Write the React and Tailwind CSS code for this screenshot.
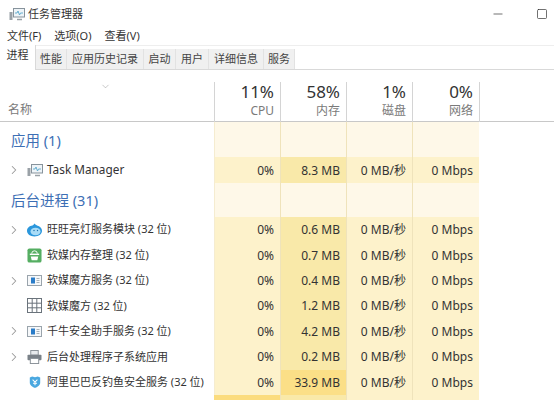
import { ChevronRight, ChevronDown, Minus, Square } from "lucide-react";

const font = "font-['Noto_Sans','Noto_Sans_CJK_SC',sans-serif]";
const tabs = [
  ["性能", "w-[31px]"],
  ["应用历史记录", "w-[77px]"],
  ["启动", "w-[32px]"],
  ["用户", "w-[33px]"],
  ["详细信息", "w-[55px]"],
  ["服务", "w-[31px]"],
];

function MonitorIcon() {
  return (
    <svg width="16" height="14" viewBox="0 0 16 14" fill="none">
      <rect x="0.5" y="5" width="3" height="8" fill="#9aa1a7" />
      <rect x="4.5" y="1.5" width="11" height="8.5" fill="#eef4f8" stroke="#87939c" />
      <path d="M6 6h2l1-2 1.5 4 1-2H14" stroke="#5aa8cc" strokeWidth="0.9" />
      <path d="M8 12.5h5" stroke="#9aa1a7" strokeWidth="1.5" />
    </svg>
  );
}

function WangIcon() {
  return (
    <svg width="15" height="14" viewBox="0 0 15 14">
      <path d="M7.500 0.500c1 1 1.500 1.500 2.500 2 3 .6 5 2.700 5 5.300 0 3.400-3.300 5.700-7.500 5.700S0 11.200 0 7.800c0-3 2.500-5 5.500-5.300.8-.4 1.300-1 2-2z" fill="#2b97dc" />
      <ellipse cx="8.500" cy="8.500" rx="5" ry="3.800" fill="#a9dcf7" />
      <circle cx="7" cy="7.500" r="0.700" fill="#1b6fa8" />
      <circle cx="10.500" cy="7.500" r="0.700" fill="#1b6fa8" />
    </svg>
  );
}

function CleanIcon() {
  return (
    <svg width="15" height="15" viewBox="0 0 16 16">
      <rect x="0.5" y="0.5" width="15" height="15" rx="2" fill="#55ae62" />
      <rect x="3" y="6" width="10" height="1.500" fill="#fff" />
      <path d="M4 9h8l-1 4H5z" fill="#fff" />
      <path d="M5 6a3 3 0 0 1 6 0" stroke="#fff" fill="none" />
    </svg>
  );
}

function ServiceIcon() {
  return (
    <svg width="15" height="11" viewBox="0 0 15 11">
      <rect x="0.5" y="0.5" width="14" height="10" fill="#f6f8fa" stroke="#9aa4ac" />
      <rect x="4" y="2.500" width="4" height="6" fill="#2a7cc8" />
      <path d="M9.500 3.500h3M9.500 5.500h3M9.500 7.500h3" stroke="#a9b3ba" />
    </svg>
  );
}

function GridIcon() {
  return (
    <svg width="15" height="15" viewBox="0 0 15 15" fill="none" stroke="#6a737b">
      <rect x="0.5" y="0.5" width="14" height="14" />
      <path d="M5.200 0.500v14M9.800 0.500v14M0.500 5.200h14M0.500 9.800h14" />
    </svg>
  );
}

function PrinterIcon() {
  return (
    <svg width="15" height="14" viewBox="0 0 16 15">
      <rect x="4" y="0.500" width="8" height="5" fill="#e8ebee" stroke="#868e95" />
      <rect x="0.500" y="5" width="15" height="6" rx="1" fill="#7a8188" />
      <rect x="3.500" y="9" width="9" height="5.500" fill="#fff" stroke="#868e95" />
    </svg>
  );
}

function ShieldIcon() {
  return (
    <svg width="12" height="14" viewBox="0 0 15 16">
      <path d="M1 2.500 4 1l3.500 1L11 1l3 1.500V9c0 3-3.500 5.500-6.500 6.500C4.500 14.500 1 12 1 9z" fill="#4aa8e0" />
      <path d="M4.500 5l3 3 3-3M7.500 8v4M5 9.500h5" stroke="#fff" fill="none" strokeWidth="1.300" />
    </svg>
  );
}

const processes = [
  { name: "旺旺亮灯服务模块 (32 位)", icon: <WangIcon />, mem: "0.6 MB", expand: true },
  { name: "软媒内存整理 (32 位)", icon: <CleanIcon />, mem: "0.7 MB" },
  { name: "软媒魔方服务 (32 位)", icon: <ServiceIcon />, mem: "0.4 MB", expand: true },
  { name: "软媒魔方 (32 位)", icon: <GridIcon />, mem: "1.2 MB" },
  { name: "千牛安全助手服务 (32 位)", icon: <ServiceIcon />, mem: "4.2 MB", expand: true },
  { name: "后台处理程序子系统应用", icon: <PrinterIcon />, mem: "0.2 MB", expand: true },
  { name: "阿里巴巴反钓鱼安全服务 (32 位)", icon: <ShieldIcon />, mem: "33.9 MB", hot: true, iconPad: "pl-[2px]" },
];

function SectionRow({ title, height }) {
  return (
    <div className={`grid grid-cols-[214px_66px_66px_66px_67px] ${height}`}>
      <div className="pl-[11px] pt-[2px] flex items-center text-[14.5px] text-[#3d6fb5]">{title}</div>
      <div className="bg-[#fef8e8] border-l border-[#f5ecd0]" />
      <div className="bg-[#fef8e8] border-l border-[#efe3bb]" />
      <div className="bg-[#fef8e8] border-l border-[#efe3bb]" />
      <div className="bg-[#fef8e8] border-l border-[#efe3bb]" />
    </div>
  );
}

function ProcessRow({ name, icon, mem, expand, hot, height, iconPad = "", nameSize = "text-[11px]" }) {
  const num = "flex items-center justify-end pr-[6px] pt-px text-[12px] text-[#333]";
  return (
    <div className={`grid grid-cols-[214px_66px_66px_66px_67px] ${height}`}>
      <div className={`flex items-center ${nameSize} text-[#333]`}>
        <span className="w-[27px] pl-[7px]">
          {expand && <ChevronRight size={14} strokeWidth={1.8} className="text-[#9a9a9a]" />}
        </span>
        <span className={`w-[20px] flex ${iconPad}`}>{icon}</span>
        <span className="whitespace-nowrap">{name}</span>
      </div>
      <div className={`${num} bg-[#fdf2cb] border-l border-[#f5ecd0]`}>0%</div>
      <div className={`${num} border-l border-[#efe3bb] ${hot ? "bg-[#fbdf87]" : "bg-[#f9e9a9]"}`}>{mem}</div>
      <div className={`${num} bg-[#fdf2cb] border-l border-[#efe3bb]`}>0 MB/秒</div>
      <div className={`${num} bg-[#fdf2cb] border-l border-[#efe3bb]`}>0 Mbps</div>
    </div>
  );
}

function HeaderCell({ pct, label }) {
  return (
    <div className="h-[40px] mt-[12px] border-l border-[#d4d4d4] flex flex-col items-end pr-[6px]">
      <span className="text-[17px] leading-[20px] text-[#333]">{pct}</span>
      <span className="text-[12px] leading-[17px] text-[#7a7a7a]">{label}</span>
    </div>
  );
}

export default function App() {
  return (
    <div className={`w-[554px] h-[404px] overflow-hidden bg-white ${font}`}>
      {/* title bar */}
      <div className="h-[28px] flex items-center pl-[9px] pr-[6px]">
        <MonitorIcon />
        <span className="ml-[3px] text-[11px] text-[#333]">任务管理器</span>
        <Minus size={14} strokeWidth={1.2} className="ml-auto text-[#333] mr-[31px]" />
        <Square size={12} strokeWidth={1.4} className="text-[#333]" />
      </div>

      {/* menu */}
      <div className="h-[18px] flex items-center gap-[13px] pl-[7px] text-[11px] text-[#333] border-b border-[#eeeeee]">
        <span>文件(F)</span>
        <span>选项(O)</span>
        <span>查看(V)</span>
      </div>

      {/* tabs */}
      <div className="h-[24px] flex items-end border-b border-[#d9d9d9] text-[11px]">
        <div className="w-[36px] h-[25px] -mb-px pb-[4px] flex items-center justify-center bg-white border-r border-[#d9d9d9] text-[#333]">
          进程
        </div>
        {tabs.map(([label, width]) => (
          <div key={label} className={`${width} h-[20px] pt-px flex items-center justify-center bg-[#f0f0f0] border-r border-[#e2e2e2] text-[#444]`}>
            {label}
          </div>
        ))}
      </div>

      {/* table header */}
      <div className="grid grid-cols-[214px_66px_66px_66px_67px_1fr] h-[52px] border-b border-[#c8c8c8]">
        <div className="relative flex items-end pl-[8px] pb-[3px] text-[12px] leading-[18px] text-[#7a7a7a]">
          名称
          <ChevronDown size={11} strokeWidth={1} className="absolute left-[100px] top-[11px] text-[#888]" />
        </div>
        <HeaderCell pct="11%" label="CPU" />
        <HeaderCell pct="58%" label="内存" />
        <HeaderCell pct="1%" label="磁盘" />
        <HeaderCell pct="0%" label="网络" />
        <div className="border-l border-[#d4d4d4] mt-[12px]" />
      </div>

      {/* rows */}
      <SectionRow title="应用 (1)" height="h-[35px]" />
      <ProcessRow name="Task Manager" icon={<MonitorIcon />} mem="8.3 MB" expand nameSize="text-[11.8px]" height="h-[26px]" />
      <SectionRow title="后台进程 (31)" height="h-[34px]" />
      {processes.map((p) => (
        <ProcessRow key={p.name} {...p} height="h-[25.43px]" />
      ))}
      <div className="grid grid-cols-[214px_66px_66px_66px_67px] h-[5px]">
        <div />
        <div className="bg-[#fbdc7e]" />
        <div className="bg-[#f9e9a9] border-l border-[#efe3bb]" />
        <div className="bg-[#fdf2cb] border-l border-[#efe3bb]" />
        <div className="bg-[#fdf2cb] border-l border-[#efe3bb]" />
      </div>
    </div>
  );
}
